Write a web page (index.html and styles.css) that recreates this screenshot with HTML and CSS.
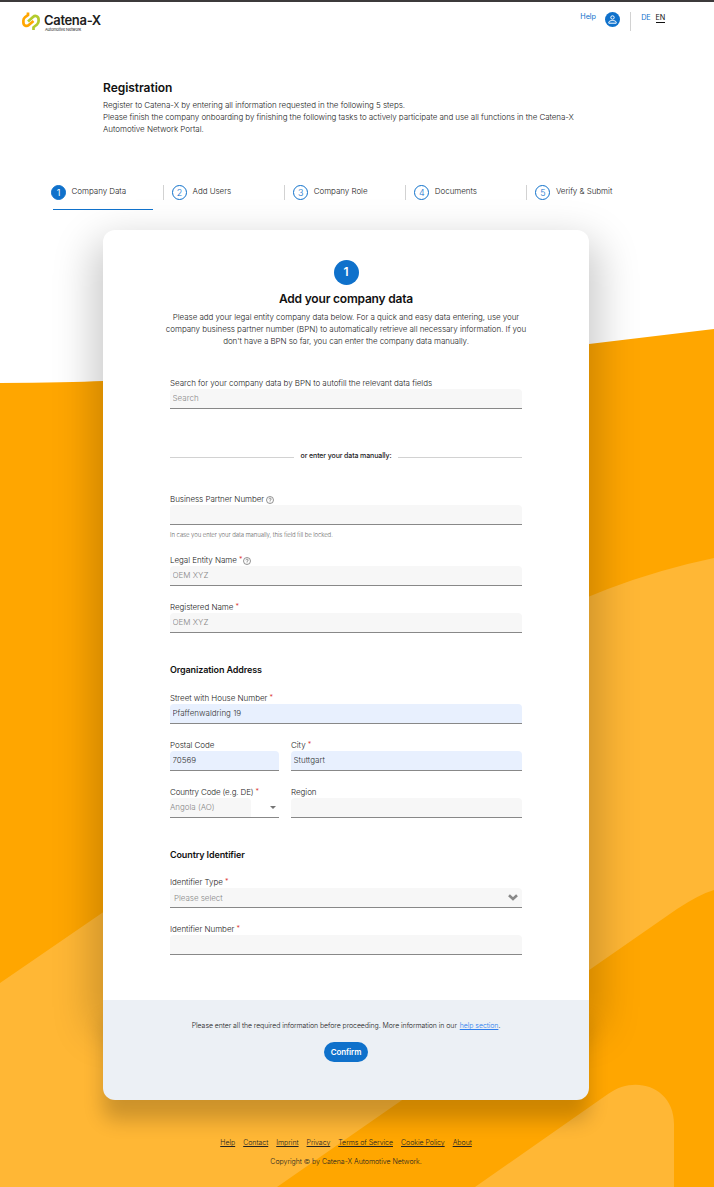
FILE: index.html
```html
<!DOCTYPE html>
<html lang="en">
<head>
<meta charset="utf-8">
<title>Catena-X Registration</title>
<link rel="stylesheet" href="styles.css">
</head>
<body>
<svg class="backdrop" viewBox="0 0 714 1187" aria-hidden="true">
  <path fill="#ffa600" d="M0 383 Q70 382.500 103 381 Q350 372 589 344 L714 329 V1187 H0Z"/>
  <path fill="#ffb735" d="M0 983 L430 688 Q560 590 714 558 V890 Q700 894 677 909 L277 1187 H0Z"/>
  <path fill="#ffb735" d="M475 1187 L608 1094 C635 1074 674 1087 674 1124 V1187Z"/>
</svg>
<div class="page">
  <header class="header">
    <div class="logo">
      <svg class="logo-mark" width="18" height="19" viewBox="0 0 18 19" fill="none" stroke-width="2.700">
        <path stroke="#ffa600" d="M6 .5 V3 L3 5.300 Q1.400 6.600 1.400 8.500 V10.500 C1.400 14 4.800 14.800 6.800 13 L11.500 9"/>
        <path stroke="#b3cb2d" d="M11.500 18 V15.300 L15 12.500 Q16.600 11 16.600 9 V7.500 C16.600 4 13.200 3 11 5 L6 9.400"/>
      </svg>
      <div class="logo-text"><span class="logo-name">Catena-X</span><span class="logo-sub">Automotive Network</span></div>
    </div>
    <nav class="tools">
      <a class="help">Help</a>
      <span class="avatar"><svg width="9" height="9" viewBox="0 0 9 9" fill="none" stroke="#fff" stroke-width="1"><circle cx="4.500" cy="2.500" r="1.700"/><path d="M.8 8.200 V7.200 C1.200 5 7.800 5 8.200 7.200 V8.200Z"/></svg></span>
      <span class="rule"></span>
      <a class="lang">DE</a>
      <a class="lang lang-on">EN</a>
    </nav>
  </header>

  <section class="intro">
    <h1>Registration</h1>
    <p>Register to Catena-X by entering all information requested in the following 5 steps.<br><span class="long">Please finish the company onboarding by finishing the following tasks to actively participate and use all functions in the Catena-X</span><br>Automotive Network Portal.</p>
  </section>

  <ol class="steps">
    <li class="step active"><span class="num">1</span><span>Company Data</span></li>
    <li class="step"><span class="num">2</span><span>Add Users</span></li>
    <li class="step"><span class="num">3</span><span>Company Role</span></li>
    <li class="step"><span class="num">4</span><span>Documents</span></li>
    <li class="step"><span class="num">5</span><span>Verify &amp; Submit</span></li>
  </ol>

  <main class="card">
    <div class="card-body">
      <div class="badge">1</div>
      <h2>Add your company data</h2>
      <p class="lead">Please add your legal entity company data below. For a quick and easy data entering, use your<br>company business partner number (BPN) to automatically retrieve all necessary information. If you<br>don't have a BPN so far, you can enter the company data manually.</p>
      <form class="form">
        <div class="field"><label>Search for your company data by BPN to autofill the relevant data fields</label><input placeholder="Search"></div>
        <div class="or"><span>or enter your data manually:</span></div>
        <div class="field"><label>Business Partner Number <svg class="q" viewBox="0 0 8 8"><circle cx="4" cy="4" r="3.500"/><path d="M2.900 3.300 C2.900 1.700 5.200 1.800 5.200 3.200 Q5.200 3.800 4 4.400 V4.900 M4 5.500 V6.200"/></svg></label><input></div>
        <p class="hint">In case you enter your data manually, this field fill be locked.</p>
        <div class="field"><label>Legal Entity Name <i>*</i><svg class="q" viewBox="0 0 8 8"><circle cx="4" cy="4" r="3.500"/><path d="M2.900 3.300 C2.900 1.700 5.200 1.800 5.200 3.200 Q5.200 3.800 4 4.400 V4.900 M4 5.500 V6.200"/></svg></label><input placeholder="OEM XYZ"></div>
        <div class="field"><label>Registered Name <i>*</i></label><input placeholder="OEM XYZ"></div>
        <h3>Organization Address</h3>
        <div class="field"><label>Street with House Number <i>*</i></label><input class="filled" value="Pfaffenwaldring 19"></div>
        <div class="row">
          <div class="field"><label>Postal Code</label><input class="filled" value="70569"></div>
          <div class="field"><label>City <i>*</i></label><input class="filled" value="Stuttgart"></div>
        </div>
        <div class="row">
          <div class="field"><label class="tight">Country Code (e.g. DE) <i>*</i></label><div class="combo"><span class="combo-value">Angola (AO)</span><svg width="6" height="3" viewBox="0 0 6 3"><path fill="#757575" d="M0 0H6L3 3Z"/></svg></div></div>
          <div class="field"><label>Region</label><input></div>
        </div>
        <h3 class="after-row">Country Identifier</h3>
        <div class="field"><label>Identifier Type <i>*</i></label><div class="select"><span>Please select</span><svg width="10" height="7" viewBox="0 0 10 7"><path fill="none" stroke="#888" stroke-width="2.600" d="M1 1.200 L5 5 L9 1.200"/></svg></div></div>
        <div class="field"><label>Identifier Number <i>*</i></label><input></div>
      </form>
    </div>
    <div class="card-foot">
      <p>Please enter all the required information before proceeding. More information in our <a>help section</a>.</p>
      <button type="button">Confirm</button>
    </div>
  </main>

  <footer class="footer">
    <nav><a>Help</a><a>Contact</a><a>Imprint</a><a>Privacy</a><a>Terms of Service</a><a>Cookie Policy</a><a>About</a></nav>
    <p>Copyright © by Catena-X Automotive Network.</p>
  </footer>
</div>
</body>
</html>
```
FILE: styles.css
```css
* { box-sizing: border-box; }
body {
  margin: 0;
  position: relative;
  width: 714px;
  height: 1187px;
  overflow: hidden;
  background: #fff;
  color: #222;
  font: 300 8px/12px Inter, "Liberation Sans", sans-serif;
  letter-spacing: -.04px;
  white-space: nowrap;
}
h1, h2, h3, p, ol { margin: 0; padding: 0; }
.backdrop { position: absolute; top: 0; left: 0; width: 714px; height: 1187px; }
.page { position: relative; border-top: 2px solid #3c3a3b; }

.header { display: flex; justify-content: space-between; height: 78px; padding: 10px 49px 0 22px; }
.logo { display: flex; gap: 4px; height: 19px; }
.logo-text { display: flex; flex-direction: column; padding-top: 1px; }
.logo-name { font-weight: 600; font-size: 13px; line-height: 15px; height: 14px; color: #1d1d1d; letter-spacing: -.33px; }
.logo-sub { font-size: 4px; line-height: 5px; font-weight: 400; color: #1d1d1d; margin-left: 1px; letter-spacing: -.14px; }
.tools { display: flex; align-items: flex-start; height: 20px; font-weight: 400; font-size: 7.300px; color: #0f71cb; }
.help { width: 25px; line-height: 10px; }
.avatar { display: flex; align-items: center; justify-content: center; width: 15px; height: 15px; border-radius: 50%; background: #0f71cb; }
.rule { width: 1px; height: 19px; margin: 0 10px; background: #d2d2d2; }
.lang { line-height: 9px; padding-top: 1px; letter-spacing: -.2px; }
.lang-on { margin-left: 5px; color: #111; border-bottom: 1px solid #111; }

.intro { padding: 0 0 0 103px; height: 103px; }
h1 { font-size: 12px; line-height: 16px; font-weight: 600; color: #111; margin-bottom: 3px; }
.long { letter-spacing: -.064px; }

.steps { display: flex; list-style: none; padding-left: 42px; height: 47px; }
.step { display: flex; gap: 5.500px; width: 121.100px; height: 15px; margin-top: 2px; padding-left: 8px; border-left: 1px solid #d2d2d2; line-height: 13px; }
.num { width: 15px; height: 15px; border: 1px solid #0f71cb; border-radius: 50%; color: #0f71cb; font-size: 9px; text-align: center; line-height: 13px; }
.step.active { border-color: transparent; position: relative; }
.active .num { background: #0f71cb; color: #fff; font-weight: 400; }
.active::after { content: ""; position: absolute; left: 10px; top: 24px; width: 100px; height: 1px; background: #0f71cb; }

.card { width: 486px; margin-left: 103px; border-radius: 12px; }
.card-body {
  height: 770px;
  padding: 30px 0 0;
  border-radius: 12px 12px 0 0;
  background: #fff;
  box-shadow: 0 20px 40px 10px rgba(0, 0, 0, .21);
  text-align: center;
}
.badge { width: 25px; height: 25px; margin: 0 auto 5px; border-radius: 50%; background: #0f71cb; color: #fff; font: 600 12px/24px Inter, sans-serif; }
h2 { font-size: 12px; line-height: 18px; font-weight: 600; color: #111; margin-bottom: 3px; letter-spacing: -.2px; }
.lead { letter-spacing: -.055px; }
.form { width: 352px; margin: 30px 0 0 67px; text-align: left; }
.field { margin-bottom: 15px; }
.field label { display: flex; height: 12px; white-space: pre; }
.field i { font-style: normal; font-size: 7px; line-height: 11px; color: #d91e18; }
.tight { letter-spacing: -.14px; }
.q { width: 8px; height: 8px; margin: 3px 0 0; fill: none; stroke: #666; stroke-width: .7; }
input, .combo, .select {
  display: flex;
  align-items: center;
  width: 100%;
  height: 20px;
  padding: 0 2.500px 1px;
  border: 0;
  border-bottom: 1px solid #888;
  border-radius: 4px 4px 0 0;
  background: #f7f7f7;
  color: #333;
  font: inherit;
}
input::placeholder { color: #888; opacity: 1; }
.filled { background: #e8f0fe; }
.or { display: flex; align-items: center; gap: 7px; height: 12px; margin: 41px 0 31px; font-weight: 500; font-size: 7px; letter-spacing: -.11px; color: #222; }
.or::before, .or::after { content: ""; flex: 1; height: 1px; margin-top: 3px; background: #d2d2d2; }
.hint { margin: -11px 0 13px; font-size: 6px; letter-spacing: -.08px; color: #666; }
h3 { height: 12px; font-size: 9px; line-height: 12px; font-weight: 600; letter-spacing: -.12px; color: #111; margin: 31px 0 16px; }
h3.after-row { margin: 16px 0 15px; }
.row { display: grid; grid-template-columns: 109px 231px; gap: 12px; }
.combo { background: #fff; border-radius: 0; padding: 0 3px 0 0; justify-content: space-between; color: #888; }
.combo-value { width: 81px; height: 19px; line-height: 18px; border-radius: 4px 4px 0 0; background: #f7f7f7; }
.select { justify-content: space-between; padding: 0 4px 0 4px; color: #888; }

.card-foot {
  height: 100px;
  padding-top: 20px;
  border-radius: 0 0 12px 12px;
  background: #ecf0f5;
  box-shadow: 0 20px 20px rgba(0, 0, 0, .2);
  text-align: center;
  font-size: 7px;
  letter-spacing: -.075px;
}
.card-foot a { margin-left: 1px; color: #2f7fee; text-decoration: underline; }
button { display: block; width: 44px; height: 20px; margin: 10px auto 0; padding: 0; border: 0; border-radius: 10px; background: #0f71cb; color: #fff; font: 600 8px/20px Inter, sans-serif; letter-spacing: -.1px; }

.footer { width: 692px; padding-top: 37px; text-align: center; font-size: 7px; color: #222; }
.footer nav { display: flex; justify-content: center; gap: 8px; margin-bottom: 7px; }
.footer nav a { text-decoration: underline; }
```
